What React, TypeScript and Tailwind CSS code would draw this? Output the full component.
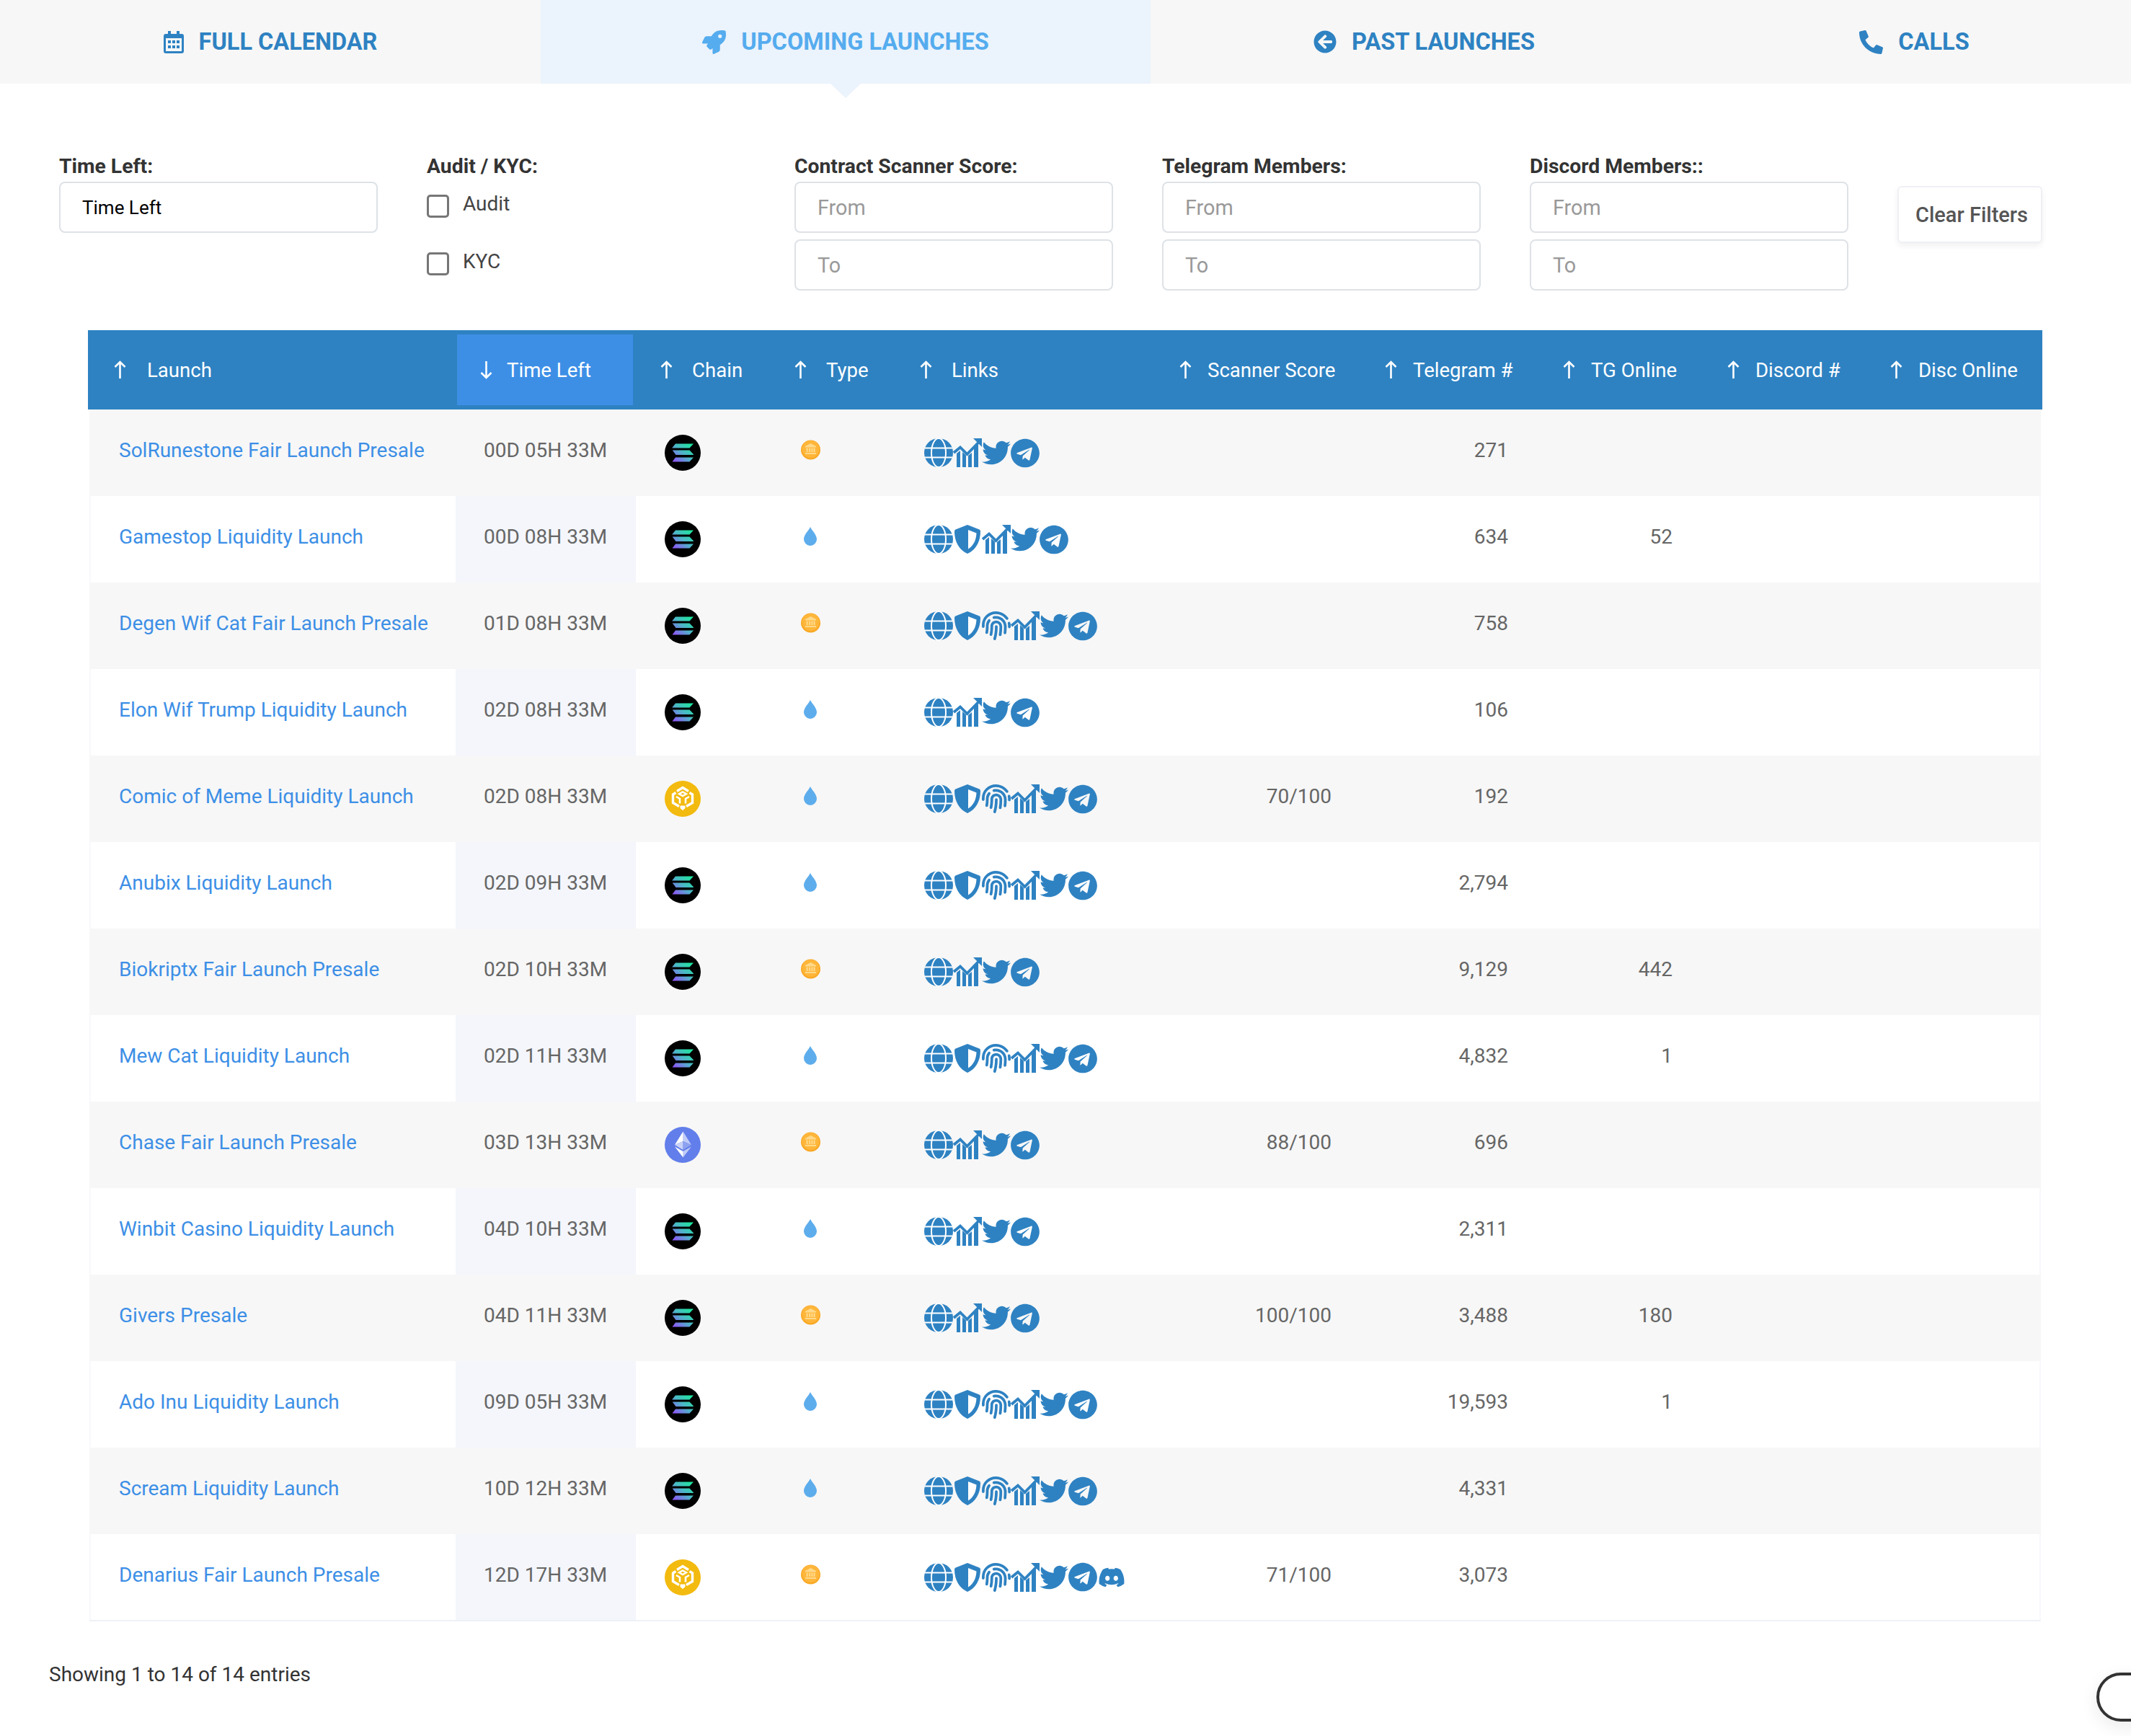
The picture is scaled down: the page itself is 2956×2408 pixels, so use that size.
import { FaArrowCircleLeft, FaDiscord, FaFingerprint, FaPhoneAlt, FaRocket, FaTelegram, FaTwitter } from "react-icons/fa";

const BLUE = "#2e82c2";
const cols = "grid grid-cols-[508px_250px_186px_174px_360px_285px_247px_228px_226px_243px]";

type Row = {
  name: string;
  time: string;
  chain: "sol" | "bnb" | "eth";
  fair: boolean;
  links: string;
  score?: string;
  tg: string;
  online?: string;
};

// links: g globe, s shield, f fingerprint, c chart, t twitter, m telegram, d discord
const rows: Row[] = [
  { name: "SolRunestone Fair Launch Presale", time: "00D 05H 33M", chain: "sol", fair: true, links: "gctm", tg: "271" },
  { name: "Gamestop Liquidity Launch", time: "00D 08H 33M", chain: "sol", fair: false, links: "gsctm", tg: "634", online: "52" },
  { name: "Degen Wif Cat Fair Launch Presale", time: "01D 08H 33M", chain: "sol", fair: true, links: "gsfctm", tg: "758" },
  { name: "Elon Wif Trump Liquidity Launch", time: "02D 08H 33M", chain: "sol", fair: false, links: "gctm", tg: "106" },
  { name: "Comic of Meme Liquidity Launch", time: "02D 08H 33M", chain: "bnb", fair: false, links: "gsfctm", score: "70/100", tg: "192" },
  { name: "Anubix Liquidity Launch", time: "02D 09H 33M", chain: "sol", fair: false, links: "gsfctm", tg: "2,794" },
  { name: "Biokriptx Fair Launch Presale", time: "02D 10H 33M", chain: "sol", fair: true, links: "gctm", tg: "9,129", online: "442" },
  { name: "Mew Cat Liquidity Launch", time: "02D 11H 33M", chain: "sol", fair: false, links: "gsfctm", tg: "4,832", online: "1" },
  { name: "Chase Fair Launch Presale", time: "03D 13H 33M", chain: "eth", fair: true, links: "gctm", score: "88/100", tg: "696" },
  { name: "Winbit Casino Liquidity Launch", time: "04D 10H 33M", chain: "sol", fair: false, links: "gctm", tg: "2,311" },
  { name: "Givers Presale", time: "04D 11H 33M", chain: "sol", fair: true, links: "gctm", score: "100/100", tg: "3,488", online: "180" },
  { name: "Ado Inu Liquidity Launch", time: "09D 05H 33M", chain: "sol", fair: false, links: "gsfctm", tg: "19,593", online: "1" },
  { name: "Scream Liquidity Launch", time: "10D 12H 33M", chain: "sol", fair: false, links: "gsfctm", tg: "4,331" },
  { name: "Denarius Fair Launch Presale", time: "12D 17H 33M", chain: "bnb", fair: true, links: "gsfctmd", score: "71/100", tg: "3,073" },
];

const headers = ["Launch", "Time Left", "Chain", "Type", "Links", "Scanner Score", "Telegram #", "TG Online", "Discord #", "Disc Online"];

function headerCell(i: number) {
  if (i === 0) return "gap-[29px] pl-[34px]";
  if (i === 1) return "my-[6px] ml-[2px] mr-[4px] gap-[20px] bg-[#3d8fe6] pl-[32px]";
  if (i < 5) return "gap-[27px] pl-[34px]";
  return "gap-[22px] pl-[34px]";
}

function CalendarIcon() {
  return (
    <svg width="28" height="31" viewBox="0 0 28 31" fill={BLUE}>
      <rect x="6" y="0" width="4" height="6" />
      <rect x="18" y="0" width="4" height="6" />
      <path fillRule="evenodd" d="M3 4h22a3 3 0 0 1 3 3v21a3 3 0 0 1-3 3H3a3 3 0 0 1-3-3V7a3 3 0 0 1 3-3zM3 10v18h22V10z" />
      <rect x="6" y="13" width="4" height="4" />
      <rect x="12" y="13" width="4" height="4" />
      <rect x="18" y="13" width="4" height="4" />
      <rect x="6" y="20" width="4" height="4" />
      <rect x="12" y="20" width="4" height="4" />
      <rect x="18" y="20" width="4" height="4" />
    </svg>
  );
}

function SortArrow({ down }: { down?: boolean }) {
  return (
    <svg width="17" height="26" viewBox="0 0 17 26" fill="none" stroke="#fff" strokeWidth="2.6" className={`shrink-0 ${down ? "rotate-180" : ""}`}>
      <path d="M8.500 25V2M1.500 9l7-7 7 7" />
    </svg>
  );
}

function Solana() {
  return (
    <svg width="50" height="50" viewBox="0 0 50 50">
      <defs>
        <linearGradient id="sol" x1="38" y1="10" x2="12" y2="40" gradientUnits="userSpaceOnUse">
          <stop offset="0" stopColor="#14f195" />
          <stop offset="0.5" stopColor="#4db5c8" />
          <stop offset="1" stopColor="#9945ff" />
        </linearGradient>
      </defs>
      <circle cx="25" cy="25" r="25" fill="#000" />
      <path fill="url(#sol)" d="M15 12.500h25l-5.500 6h-23.800q-.6 0-.2-.6zM10.700 21.500h23.800l5.500 5.800q.2.6-.4.600H15.500zM15 31.500h25l-5.500 6h-24z" />
    </svg>
  );
}

function Bnb() {
  return (
    <svg width="50" height="50" viewBox="0 0 50 50">
      <circle cx="25" cy="25" r="25" fill="#f3ba0f" />
      <g fill="none" stroke="#fff" strokeWidth="3.400" strokeLinejoin="miter">
        <path d="M17 14.500l8-5 8 5" />
        <path d="M25 15.500l5 2.800-5 2.800-5-2.800z" strokeWidth="2.400" />
        <path d="M15.500 16.500l-4 2.500v11.500l8.500 5" />
        <path d="M34.500 16.500l4 2.500v11.500l-8.500 5" />
        <path d="M16 22l5 3v6.500" strokeWidth="2.600" />
        <path d="M34 22l-5 3v6.500" strokeWidth="2.600" />
        <path d="M22 38l3 2.500 3-2.500v-3h-6z" fill="#fff" strokeWidth="1" />
      </g>
    </svg>
  );
}

function Eth() {
  return (
    <svg width="50" height="50" viewBox="0 0 50 50">
      <circle cx="25" cy="25" r="25" fill="#627eea" />
      <path fill="#fff" d="M25.500 6.500V20L14 25z" />
      <path fill="#fff" fillOpacity=".6" d="M25.500 6.500V20L37 25z" />
      <path fill="#fff" d="M14 27.500l11.500 15V34z" />
      <path fill="#fff" fillOpacity=".6" d="M37 27.500l-11.500 15V34z" />
      <path fill="#c8d2f7" d="M14 25l11.500-5v12z" />
      <path fill="#8da2ef" d="M37 25l-11.500-5v12z" />
    </svg>
  );
}

function Coin() {
  return (
    <svg width="27" height="28" viewBox="0 0 27 28">
      <circle cx="13.500" cy="14" r="13.500" fill="#f9a825" />
      <circle cx="13.500" cy="13" r="12" fill="#ffb63a" />
      <g fill="#ffd98a">
        <path d="M13.500 5l7.500 4v1.500H6V9z" />
        <rect x="7.500" y="11.500" width="2.200" height="5.500" />
        <rect x="11" y="11.500" width="2.200" height="5.500" />
        <rect x="14.300" y="11.500" width="2.200" height="5.500" />
        <rect x="17.500" y="11.500" width="2.200" height="5.500" />
        <rect x="6" y="18" width="15" height="2" />
      </g>
    </svg>
  );
}

function Drop() {
  return (
    <svg width="18" height="26" viewBox="0 0 18 26" fill="#5dadec">
      <path d="M9 0C10.500 4 18 10.500 18 17a9 9 0 0 1-18 0C0 10.500 7.500 4 9 0z" />
    </svg>
  );
}

function Globe() {
  return (
    <svg width="40" height="40" viewBox="0 0 40 40">
      <circle cx="20" cy="20" r="20" fill={BLUE} />
      <g fill="none" stroke="#fff" strokeWidth="2">
        <ellipse cx="20" cy="20" rx="10" ry="20" />
        <path d="M1 13.500h38M1 26.500h38" />
      </g>
    </svg>
  );
}

function Shield() {
  return (
    <svg width="40" height="40" viewBox="0 0 40 40">
      <path fill={BLUE} d="M20 0l16.500 6.500Q38 7.200 38 9C38 24 31 35 20 40 9 35 2 24 2 9q0-1.800 1.500-2.500z" />
      <path fill="#fff" d="M21 7l11.500 4.500C32 22 28 29 21 33.500z" />
    </svg>
  );
}

function Chart() {
  return (
    <svg width="40" height="40" viewBox="0 0 40 40" fill={BLUE}>
      <path d="M5 21l5-4v23H5zM13 19l5 4.500V40h-5zM21 24l5-4v20h-5zM29 14l6-6v32h-6z" />
      <path fill="none" stroke={BLUE} strokeWidth="3.800" d="M1 20l9-7.500 9.500 9.500L36 5" />
      <path d="M28 0h12v12z" />
    </svg>
  );
}

function LinkIcon({ k }: { k: string }) {
  return (
    <div className="flex h-10 w-10 items-center justify-center text-[#2e82c2]">
      {k === "g" && <Globe />}
      {k === "s" && <Shield />}
      {k === "f" && <FaFingerprint size={40} />}
      {k === "c" && <Chart />}
      {k === "t" && <FaTwitter size={40} />}
      {k === "m" && <FaTelegram size={41} />}
      {k === "d" && <FaDiscord size={38} />}
    </div>
  );
}

function Tab({ label, icon, width, active }: { label: string; icon: React.ReactNode; width: string; active?: boolean }) {
  return (
    <div className={`relative flex h-full items-center justify-center gap-[21px] text-[32.500px] font-bold uppercase ${width} ${active ? "bg-[#ebf3fc] text-[#55acee]" : "bg-[#f7f7f7] text-[#2e82c2]"}`}>
      {icon}
      <span>{label}</span>
      {active && (
        <div className="absolute left-1/2 top-full -translate-x-1/2 border-x-[21px] border-t-[20px] border-x-transparent border-t-[#ebf3fc]" />
      )}
    </div>
  );
}

function NumberInput({ placeholder }: { placeholder: string }) {
  return (
    <input
      placeholder={placeholder}
      className="h-[71px] w-full rounded-lg border-2 border-[#dee2e6] bg-white px-[30px] text-[28.800px] text-[#333] outline-none placeholder:text-[#999]"
    />
  );
}

function Check({ label }: { label: string }) {
  return (
    <label className="flex h-[32px] items-start gap-[19px] text-[28px] leading-[26px] text-[#444]">
      <input type="checkbox" className="h-[32px] w-[31px] appearance-none rounded-[5px] border-[3px] border-[#767676] bg-white" />
      <span>{label}</span>
    </label>
  );
}

function FilterCol({ label, children }: { label: string; children: React.ReactNode }) {
  return (
    <div className="w-[442px]">
      <div className="h-[38px] text-[28.300px] leading-[33px] font-bold text-[#333]">{label}</div>
      {children}
    </div>
  );
}

export default function App() {
  return (
    <div className="relative h-[2408px] overflow-hidden bg-white font-[Roboto,sans-serif]">
      <div className="flex h-[116px]">
        <Tab width="w-[750px]" label="Full Calendar" icon={<CalendarIcon />} />
        <Tab width="w-[846px]" label="Upcoming Launches" icon={<FaRocket size={33} />} active />
        <Tab width="w-[759px]" label="Past Launches" icon={<FaArrowCircleLeft size={32} />} />
        <Tab width="w-[601px]" label="Calls" icon={<FaPhoneAlt size={33} />} />
      </div>

      <div className="flex gap-[68px] pl-[82px] pt-[98px]">
        <FilterCol label="Time Left:">
          <input readOnly value="Time Left" className="h-[71px] w-full rounded-lg border-2 border-[#dee2e6] bg-white px-[30px] text-[26px] text-black outline-none" />
        </FilterCol>
        <FilterCol label="Audit / KYC:">
          <div className="flex flex-col gap-[48px] pt-[18px]">
            <Check label="Audit" />
            <Check label="KYC" />
          </div>
        </FilterCol>
        {["Contract Scanner Score:", "Telegram Members:", "Discord Members::"].map((l) => (
          <FilterCol key={l} label={l}>
            <div className="flex flex-col gap-[9px]">
              <NumberInput placeholder="From" />
              <NumberInput placeholder="To" />
            </div>
          </FilterCol>
        ))}
        <button className="mt-[44px] h-[79px] w-[201px] rounded-md border-2 border-[#eff0f5] bg-white pl-[5px] pt-[3px] text-[29px] font-medium text-[#555] shadow-[0_4px_8px_rgba(0,0,0,0.06)]">
          Clear Filters
        </button>
      </div>

      <div className="ml-[122px] mt-[55px] w-[2711px]">
        <div className={`${cols} h-[110px] bg-[#2e82c2] px-[2px] text-[27.600px] text-white`}>
          {headers.map((h, i) => (
            <div key={h} className={`flex items-center ${headerCell(i)}`}>
              <SortArrow down={i === 1} />
              <span className="whitespace-nowrap pt-[2px]">{h}</span>
            </div>
          ))}
        </div>
        <div className="mx-[2px] border-b-2 border-[#eef1f6]">
          {rows.map((r, i) => (
            <div key={r.name} className={`${cols} h-[120px] text-[28px] text-[#666] last:h-[119px] ${i % 2 === 0 ? "bg-[#f7f7f7]" : "bg-white"}`}>
              <div className={`flex items-center pb-[6px] text-[#3d8fe6] ${i % 2 === 0 ? "pl-[41px]" : "border-l-2 border-[#f8f8fd] pl-[39px]"}`}>{r.name}</div>
              <div className={`flex items-center pb-[6px] pl-[39px] ${i % 2 === 0 ? "" : "bg-[#f4f6fb]"}`}>{r.time}</div>
              <div className="flex items-center pl-[40px]">
                {r.chain === "sol" && <Solana />}
                {r.chain === "bnb" && <Bnb />}
                {r.chain === "eth" && <Eth />}
              </div>
              <div className="flex w-[112px] items-center justify-center pb-[8px]">{r.fair ? <Coin /> : <Drop />}</div>
              <div className="flex items-center pl-[40px]">
                {r.links.split("").map((k, j) => (
                  <LinkIcon key={j} k={k} />
                ))}
              </div>
              <div className="flex items-center justify-end pb-[6px] pr-[40px]">{r.score}</div>
              <div className="flex items-center justify-end pb-[6px] pr-[42px]">{r.tg}</div>
              <div className="flex items-center justify-end pb-[6px] pr-[42px]">{r.online}</div>
              <div />
              <div className={i % 2 === 0 ? "" : "border-r-2 border-[#f8f8fd]"} />
            </div>
          ))}
        </div>
      </div>

      <div className="ml-[68px] mt-[56px] text-[28px] leading-[36px] text-[#333]">Showing 1 to 14 of 14 entries</div>

      <div className="absolute left-[2908px] top-[2320px] h-[68px] w-[100px] rounded-full border-[4px] border-[#333] bg-white shadow-[0_8px_24px_rgba(0,0,0,0.08)]" />
    </div>
  );
}
